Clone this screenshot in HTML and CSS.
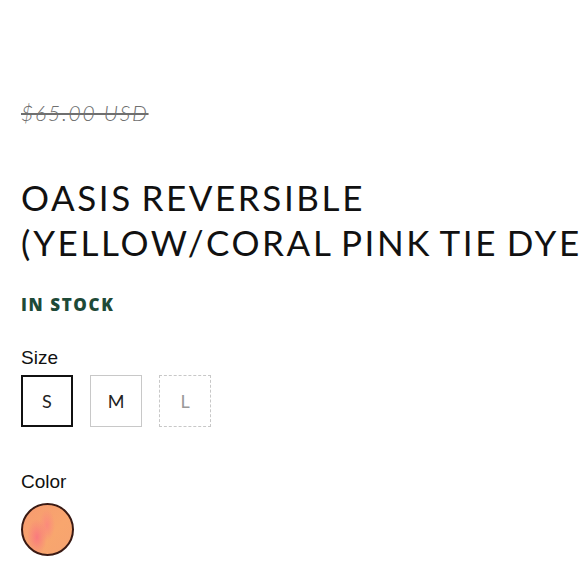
FILE: index.html
```html
<!DOCTYPE html>
<html>
<head>
<meta charset="utf-8">
<link rel="stylesheet" href="styles.css">
</head>
<body>
<div class="product">
  <div class="price"><s>$65.00 USD</s></div>
  <h1 class="title">OASIS REVERSIBLE<br>(YELLOW/CORAL PINK TIE DYE)</h1>
  <div class="stock">IN STOCK</div>
  <div class="label">Size</div>
  <div class="sizes">
    <div class="size selected">S</div>
    <div class="size">M</div>
    <div class="size soldout">L</div>
  </div>
  <div class="label color-label">Color</div>
  <div class="swatch"></div>
</div>
</body>
</html>
```
FILE: styles.css
```css
html, body {
  margin: 0;
  padding: 0;
  background: #fff;
  overflow: hidden;
}
.product {
  padding: 100px 0 0 21px;
  font-family: "Lato", "Liberation Sans", sans-serif;
  color: #111;
  white-space: nowrap;
}
.price {
  font-family: "Lato", "Liberation Sans", sans-serif;
  font-style: italic;
  font-weight: 300;
  font-size: 21px;
  color: #6f6f6f;
  line-height: 26px;
  letter-spacing: 1.8px;
}
.price s {
  text-decoration-thickness: 1.5px;
}
.title {
  margin: 49px 0 0;
  font-family: "Lato", sans-serif;
  font-weight: 400;
  font-size: 35px;
  line-height: 45px;
  letter-spacing: 2.6px;
  word-spacing: -3px;
  color: #111;
}
.stock {
  margin-top: 30px;
  font-family: "Open Sans", sans-serif;
  font-weight: 800;
  font-size: 17px;
  letter-spacing: 1.6px;
  color: #1e4a38;
  line-height: 20px;
}
.label {
  margin-top: 31px;
  font-family: "Liberation Sans", sans-serif;
  font-size: 19px;
  line-height: 24px;
  color: #111;
}
.sizes {
  display: flex;
  gap: 17px;
  margin-top: 5px;
}
.size {
  box-sizing: border-box;
  width: 52px;
  height: 52px;
  border: 1px solid #c8c8c8;
  display: flex;
  align-items: center;
  justify-content: center;
  font-family: "Lato", sans-serif;
  font-size: 18px;
  color: #222;
}
.size.selected {
  border: 2px solid #111;
}
.size.soldout {
  border: 1px dashed #c8c8c8;
  color: #999;
}
.color-label {
  margin-top: 43px;
}
.swatch {
  margin-top: 9px;
  box-sizing: border-box;
  width: 53px;
  height: 53px;
  border-radius: 50%;
  border: 2px solid #3a1a14;
  background:
    radial-gradient(ellipse 10px 18px at 14px 32px, #f97a7e 0%, rgba(249,122,126,0) 100%),
    radial-gradient(ellipse 8px 16px at 24px 20px, #fb8a7c 0%, rgba(251,138,124,0) 100%),
    linear-gradient(135deg, #f79a70, #f8a66e 60%, #f6a370);
}
```
